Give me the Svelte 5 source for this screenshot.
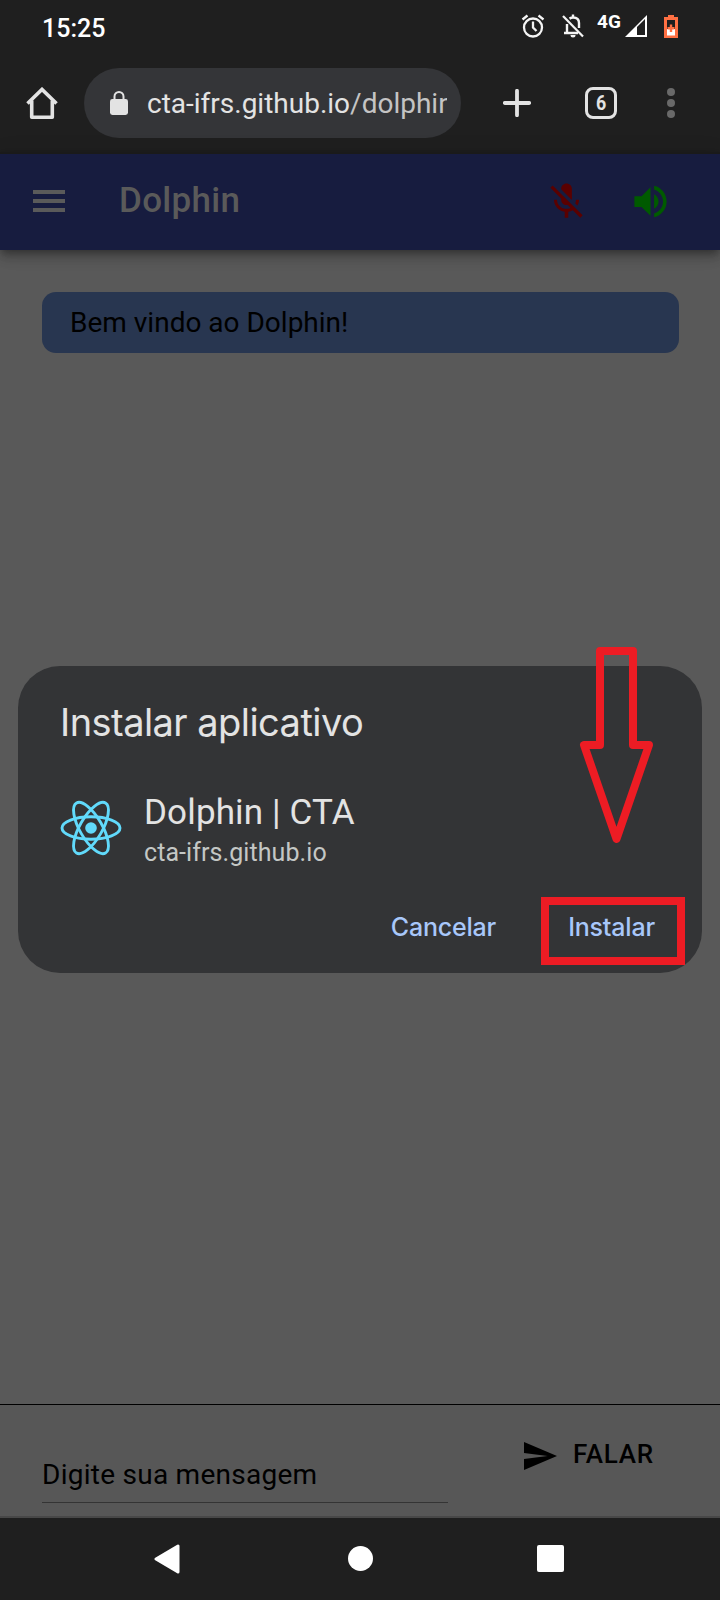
<script>
  const statusTime = '15:25';
  const orbits = [0, 60, 120];
</script>

<div class="screen">
  <header class="status">
    <span class="time">{statusTime}</span>
    <div class="status-icons">
      <svg class="alarm" width="24" height="26" viewBox="0 0 24 26" fill="none" stroke="#f4f4f4" stroke-width="2.300">
        <circle cx="12" cy="14.5" r="9" />
        <path d="M12 8.500V14.500L15.500 18M1.500 6.500L6.500 2.500M22.500 6.500L17.500 2.500" />
      </svg>
      <svg class="bell" width="24" height="26" viewBox="0 0 24 26" fill="none" stroke="#f4f4f4" stroke-width="2.200">
        <path d="M6 11V20M3 20H17M18 15V10C18 6.500 16 4.500 12 4.500C10.500 4.500 9.500 5 8.500 5.600M12 1.500V5" stroke-width="2.400" />
        <path d="M9.500 22H14.500A2.500 2.500 0 0 1 9.500 22Z" fill="#f4f4f4" stroke="none" />
        <path d="M2 3L22 23.500" />
      </svg>
      <span class="net">4G</span>
      <svg class="signal" width="22" height="22" viewBox="0 0 22 22">
        <path d="M0 22L22 0V22ZM12 12V20H20V4Z" fill="#fff" fill-rule="evenodd" />
      </svg>
      <svg class="battery" width="14" height="23" viewBox="0 0 14 23">
        <path d="M4 0H10V2H14V23H0V2H4Z" fill="#ff7043" />
        <path d="M3 5H11V14H3Z" fill="#1f1f1f" />
        <path d="M3 14H11V20.500H3Z" fill="#fff" />
        <path d="M5.800 9.500H8.200V12H10.500V14.400H8.200V17H5.800V14.400H3.500V12H5.800Z" fill="#ff7043" />
      </svg>
    </div>
  </header>

  <div class="browser">
    <svg class="home" width="32" height="33" viewBox="0 0 32 33" fill="none" stroke="#e3e3e3" stroke-width="3.600" stroke-linejoin="round">
      <path d="M1.500 16.500L16 2.400L30.500 16.500" stroke-linejoin="miter" />
      <path d="M5.700 13.500V30.300H26.300V13.500" />
    </svg>
    <div class="url">
      <svg width="18" height="24" viewBox="0 0 18 24">
        <rect y="8" width="18" height="16" rx="2.400" fill="#e3e3e3" />
        <path d="M4.500 9V5.500A4.500 4.500 0 0 1 13.500 5.500V9" fill="none" stroke="#e3e3e3" stroke-width="2" />
      </svg>
      <div class="address">cta-ifrs.github.io<span>/dolphin</span></div>
    </div>
    <svg class="plus" width="28" height="28" viewBox="0 0 28 28" stroke="#e3e3e3" stroke-width="3.800" stroke-linecap="round">
      <path d="M14 1.800V26.200M1.800 14H26.200" />
    </svg>
    <div class="tabs"><span>6</span></div>
    <div class="dots"><i></i><i></i><i></i></div>
  </div>

  <div class="appbar">
    <svg class="menu" width="32" height="22" viewBox="0 0 32 22" fill="#5a5a5a">
      <path d="M0 0H32V4H0ZM0 9H32V13H0ZM0 18H32V22H0Z" />
    </svg>
    <h1>Dolphin</h1>
    <svg class="mic" width="43" height="43" viewBox="0 0 24 24" fill="#5a0000">
      <path d="M19 11h-1.700c0 .740-.160 1.430-.430 2.050l1.230 1.230c.560-.980.900-2.090.900-3.280zM14.980 11.170c0-.060.020-.110.020-.170V5c0-1.660-1.340-3-3-3S9 3.340 9 5v.180l5.980 5.990zM4.270 3L3 4.270l6.010 6.010V11c0 1.660 1.330 3 2.990 3 .220 0 .440-.030.650-.080l1.660 1.660c-.710.330-1.500.520-2.310.520-2.760 0-5.300-2.100-5.300-5.100H5c0 3.410 2.720 6.230 6 6.720V21h2v-3.280c.910-.130 1.770-.450 2.540-.900L19.730 21 21 19.730 4.270 3z" />
    </svg>
    <svg class="speaker" width="43" height="43" viewBox="0 0 24 24" fill="#005a00">
      <path d="M3 9v6h4l5 5V4L7 9H3zm13.500 3c0-1.770-1.020-3.290-2.500-4.030v8.050c1.480-.730 2.500-2.250 2.500-4.020zM14 3.230v2.060c2.890.860 5 3.540 5 6.710s-2.110 5.850-5 6.710v2.060c4.010-.910 7-4.490 7-8.770s-2.990-7.860-7-8.770z" />
    </svg>
  </div>

  <main>
    <div class="bubble">Bem vindo ao Dolphin!</div>
  </main>

  <section class="composer">
    <div class="field">Digite sua mensagem</div>
    <div class="send">
      <svg width="33" height="28" viewBox="2 3 21 18" preserveAspectRatio="none"><path d="M2.010 21L23 12 2.010 3 2 10l15 2-15 2z" /></svg>
      <span>FALAR</span>
    </div>
  </section>

  <nav>
    <svg width="26" height="30" viewBox="0 0 26 30"><path d="M2 15L24 2V28Z" fill="#fff" stroke="#fff" stroke-width="3" stroke-linejoin="round" /></svg>
    <i class="circle"></i>
    <i class="square"></i>
  </nav>

  <div class="dialog">
    <h2>Instalar aplicativo</h2>
    <div class="app">
      <svg width="62" height="62" viewBox="-31 -31 62 62" fill="none" stroke="#61dafb" stroke-width="2.900">
        {#each orbits as angle}
          <ellipse rx="29" ry="11.200" transform="rotate({angle})" />
        {/each}
        <circle r="5.800" fill="#61dafb" stroke="none" />
      </svg>
      <div class="info">
        <div class="name">Dolphin | CTA</div>
        <div class="host">cta-ifrs.github.io</div>
      </div>
    </div>
    <div class="actions">
      <span class="cancel">Cancelar</span>
      <span class="install">Instalar</span>
    </div>
  </div>

  <svg class="arrow" width="76" height="198" viewBox="0 0 76 198" fill="none" stroke="#ed1c24" stroke-width="8" stroke-linejoin="round">
    <path d="M21 4H54V98H70L37.500 192L5 98H21Z" />
  </svg>
</div>

<style>
  :global(body) { margin: 0; background: #1f1f1f; }
  .screen {
    position: relative;
    width: 720px;
    height: 1600px;
    display: flex;
    flex-direction: column;
    overflow: hidden;
    background: #595959;
    font-family: Roboto, sans-serif;
  }
  h1, h2 { margin: 0; }
  svg, i { display: block; flex: none; }
  .status {
    height: 54px;
    flex: none;
    display: flex;
    justify-content: space-between;
    background: #1f1f1f;
    color: #fff;
    padding: 0 42px;
  }
  .time { font-size: 25px; font-weight: 500; line-height: 58px; }
  .status-icons { display: flex; align-items: flex-start; }
  .alarm { margin-top: 13px; }
  .bell { margin: 13px 0 0 16px; }
  .net { width: 25px; margin: 11px 0 0 12px; font-size: 19px; line-height: 22px; font-weight: 700; }
  .signal { margin: 15px 0 0 3px; }
  .battery { margin: 15px 0 0 17px; }
  .browser {
    height: 98px;
    box-sizing: border-box;
    flex: none;
    display: flex;
    align-items: center;
    background: #1f1f1f;
    padding: 0 41px 0 26px;
  }
  .home { margin-right: 26px; }
  .url {
    width: 377px;
    height: 70px;
    box-sizing: border-box;
    border-radius: 35px;
    background: #343538;
    display: flex;
    align-items: center;
    gap: 19px;
    padding: 0 14px 0 26px;
  }
  .address {
    flex: 1;
    min-width: 0;
    margin-top: 2px;
    overflow: hidden;
    white-space: nowrap;
    font-size: 28px;
    line-height: 40px;
    color: #e3e3e3;
  }
  .address span { color: #c4c4c4; }
  .plus { margin-left: 42px; }
  .tabs {
    width: 32px;
    height: 32px;
    box-sizing: border-box;
    margin-left: 54px;
    border: 3.500px solid #e3e3e3;
    border-radius: 8px;
    color: #e3e3e3;
    font-size: 21px;
    font-weight: 700;
    display: flex;
    align-items: center;
    justify-content: center;
    line-height: 26px;
  }
  .tabs span { transform: scaleX(0.850); }
  .dots { display: flex; flex-direction: column; gap: 3px; margin-left: auto; margin-right: 4px; }
  .dots i { width: 8px; height: 8px; border-radius: 50%; background: #696969; }
  .appbar {
    height: 98px;
    box-sizing: border-box;
    flex: none;
    display: flex;
    align-items: center;
    padding: 0 48px 2px 33px;
    border-top: 2px solid #1a1a1a;
    background: #171c3f;
    box-shadow: 0 4px 8px -2px rgba(0, 0, 0, 0.350), 0 8px 10px rgba(0, 0, 0, 0.140), 0 2px 20px rgba(0, 0, 0, 0.100);
    z-index: 1;
  }
  h1 { margin-left: 54px; font-size: 35px; font-weight: 500; line-height: 50px; letter-spacing: 0.300px; color: #5a5a5a; }
  .mic { margin-left: auto; }
  .speaker { margin-left: 41px; }
  main { flex: 1; padding: 42px 41px 0 42px; }
  .bubble {
    height: 61px;
    padding-left: 28px;
    border-radius: 14px;
    background: #283650;
    color: #000;
    font-size: 28px;
    line-height: 61px;
  }
  .composer {
    height: 114px;
    box-sizing: border-box;
    flex: none;
    display: flex;
    align-items: flex-start;
    border-top: 1px solid #000;
    border-bottom: 2px solid #484848;
    background: #575757;
    padding-left: 42px;
  }
  .field {
    width: 406px;
    height: 98px;
    box-sizing: border-box;
    padding-top: 50px;
    border-bottom: 1px solid #343434;
    font-size: 28px;
    line-height: 40px;
    letter-spacing: 0.260px;
    white-space: nowrap;
  }
  .send { display: flex; align-items: center; margin: 30px 0 0 76px; height: 42px; }
  .send span { margin: -4px 0 0 16px; font-size: 26px; font-weight: 500; line-height: 40px; letter-spacing: 0.750px; }
  nav { height: 82px; box-sizing: border-box; flex: none; display: flex; align-items: center; background: #1f1f1f; padding: 0 0 1px 154px; }
  .circle { width: 25px; height: 25px; border-radius: 50%; background: #fff; margin-left: 168px; }
  .square { width: 27px; height: 27px; border-radius: 2px; background: #fff; margin-left: 164px; }
  .dialog {
    position: absolute;
    left: 18px;
    top: 666px;
    width: 684px;
    height: 307px;
    box-sizing: border-box;
    padding: 32px 17px 0 42px;
    border-radius: 42px;
    background: #333436;
    color: #e3e3e3;
  }
  h2 { font: 400 38px/48px Inter, sans-serif; letter-spacing: -0.550px; white-space: nowrap; }
  .app { display: flex; align-items: center; gap: 22px; height: 84px; margin-top: 40px; }
  .info { margin-top: 4px; }
  .name { font-size: 35px; line-height: 46px; letter-spacing: 0.150px; }
  .host { font-size: 25px; line-height: 34px; letter-spacing: 0.080px; color: #c4c7c5; }
  .actions { display: flex; justify-content: flex-end; margin-top: 27px; font: 500 25px/60px Inter, sans-serif; letter-spacing: -0.200px; color: #a8c7fa; }
  .cancel { margin-right: 45px; }
  .install { width: 144px; height: 68px; box-sizing: border-box; padding-right: 3px; border: 8px solid #ed1c24; line-height: 44px; text-align: center; }
  .arrow { position: absolute; left: 579px; top: 647px; }
</style>
